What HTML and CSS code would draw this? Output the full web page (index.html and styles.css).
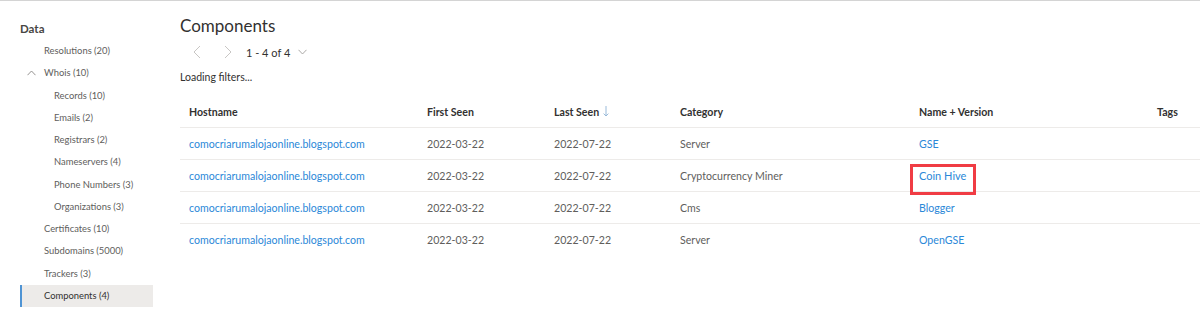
FILE: index.html
```html
<!DOCTYPE html>
<html lang="en">
<head>
<meta charset="utf-8">
<title>Components</title>
<link rel="stylesheet" href="styles.css">
</head>
<body>
<div class="page">
  <nav class="sidebar">
    <div class="side-title">Data</div>
    <ul class="nav">
      <li class="nav-item l1">Resolutions (20)</li>
      <li class="nav-item l1 group">
        <svg class="chev-up" width="9" height="6" viewBox="0 0 9 6"><path d="M0.5 5.2 L4.5 1 L8.5 5.2" fill="none" stroke="#8a8886" stroke-width="0.9"/></svg>
        Whois (10)
      </li>
      <li class="nav-item l2">Records (10)</li>
      <li class="nav-item l2">Emails (2)</li>
      <li class="nav-item l2">Registrars (2)</li>
      <li class="nav-item l2">Nameservers (4)</li>
      <li class="nav-item l2">Phone Numbers (3)</li>
      <li class="nav-item l2">Organizations (3)</li>
      <li class="nav-item l1">Certificates (10)</li>
      <li class="nav-item l1">Subdomains (5000)</li>
      <li class="nav-item l1">Trackers (3)</li>
      <li class="nav-item l1 active">Components (4)</li>
    </ul>
  </nav>
  <main class="main">
    <h1 class="title">Components</h1>
    <div class="pager">
      <svg class="pg-btn" width="8" height="14" viewBox="0 0 8 14"><path d="M7 1 L1 7 L7 13" fill="none" stroke="#c8c6c4" stroke-width="1"/></svg>
      <svg class="pg-btn next" width="8" height="14" viewBox="0 0 8 14"><path d="M1 1 L7 7 L1 13" fill="none" stroke="#c8c6c4" stroke-width="1"/></svg>
      <span class="pg-text">1 - 4 of 4</span>
      <svg class="pg-drop" width="9" height="6" viewBox="0 0 9 6"><path d="M0.5 0.8 L4.5 5 L8.5 0.8" fill="none" stroke="#a19f9d" stroke-width="0.9"/></svg>
    </div>
    <div class="loading">Loading filters...</div>
    <div class="table">
      <div class="row head">
        <div class="cell">Hostname</div>
        <div class="cell">First Seen</div>
        <div class="cell">Last Seen <svg class="sort" width="6" height="11" viewBox="0 0 6 11"><path d="M3 0 V10 M0.6 7.6 L3 10 L5.4 7.6" fill="none" stroke="#8fb3d6" stroke-width="0.9"/></svg></div>
        <div class="cell">Category</div>
        <div class="cell">Name + Version</div>
        <div class="cell">Tags</div>
      </div>
      <div class="row">
        <div class="cell link">comocriarumalojaonline.blogspot.com</div>
        <div class="cell">2022-03-22</div>
        <div class="cell">2022-07-22</div>
        <div class="cell">Server</div>
        <div class="cell link">GSE</div>
        <div class="cell"></div>
      </div>
      <div class="row">
        <div class="cell link">comocriarumalojaonline.blogspot.com</div>
        <div class="cell">2022-03-22</div>
        <div class="cell">2022-07-22</div>
        <div class="cell">Cryptocurrency Miner</div>
        <div class="cell link"><span class="marked">Coin Hive</span></div>
        <div class="cell"></div>
      </div>
      <div class="row">
        <div class="cell link">comocriarumalojaonline.blogspot.com</div>
        <div class="cell">2022-03-22</div>
        <div class="cell">2022-07-22</div>
        <div class="cell">Cms</div>
        <div class="cell link">Blogger</div>
        <div class="cell"></div>
      </div>
      <div class="row last">
        <div class="cell link">comocriarumalojaonline.blogspot.com</div>
        <div class="cell">2022-03-22</div>
        <div class="cell">2022-07-22</div>
        <div class="cell">Server</div>
        <div class="cell link">OpenGSE</div>
        <div class="cell"></div>
      </div>
    </div>
  </main>
</div>
</body>
</html>
```

FILE: styles.css
```css
* { box-sizing: border-box; }
html, body { margin: 0; padding: 0; background: #fff; }
body {
  font-family: "Lato", "Open Sans", "Liberation Sans", sans-serif;
  color: #323130;
  border-top: 1px solid #d4d4d4;
  height: 316px;
  overflow: hidden;
}
.page { display: flex; }
.sidebar { width: 180px; padding-left: 20px; padding-top: 17px; flex: none; }
.side-title {
  font-size: 11.5px; font-weight: 700; color: #484644;
  height: 22px; line-height: 22px;
}
.nav { list-style: none; margin: 0; padding: 0; width: 133px; }
.nav-item {
  height: 22.27px; line-height: 22.27px;
  font-size: 9.4px; color: #605e5c; white-space: nowrap;
  position: relative;
  display: flex; align-items: center;
}
.nav-item.l1 { padding-left: 24px; }
.nav-item.l2 { padding-left: 34px; }
.nav-item.group { padding-left: 7px; }
.chev-up { margin-right: 8px; }
.nav-item.active {
  background: #edebe9; color: #323130;
  border-left: 2px solid #4f94d4; padding-left: 22px;
}
.main { flex: 1; min-width: 0; padding-top: 13px; }
.title {
  margin: 0; font-size: 17px; font-weight: 400; color: #323130;
  height: 24px; line-height: 24px;
}
.pager { display: flex; align-items: center; height: 24px; margin-top: 2px; }
.pg-btn { margin-left: 13px; }
.pg-btn.next { margin-left: 23px; }
.pg-text { font-size: 11px; margin-left: 14px; color: #323130; }
.pg-drop { margin-left: 8px; }
.loading { font-size: 10.5px; height: 16px; line-height: 16px; margin-top: 5px; color: #323130; }
.table { margin-top: 11px; }
.row {
  display: grid;
  grid-template-columns: 238px 127px 126px 239px 238px 1fr;
  height: 32px; align-items: center;
  border-bottom: 1px solid #edebe9;
  font-size: 10.6px; color: #605e5c;
}
.row.last { border-bottom: none; }
.row.head { color: #323130; font-weight: 700; font-size: 10.6px; }
.cell { padding-left: 9px; white-space: nowrap; display: flex; align-items: center; }
.link { color: #2b88d8; }
.sort { margin-left: 4px; }
.marked { position: relative; font-size: 11px; }
.marked::after {
  content: ""; position: absolute;
  left: -9px; top: -5px; width: 60px; height: 25px;
  border: 3px solid #f03c44;
}
```
